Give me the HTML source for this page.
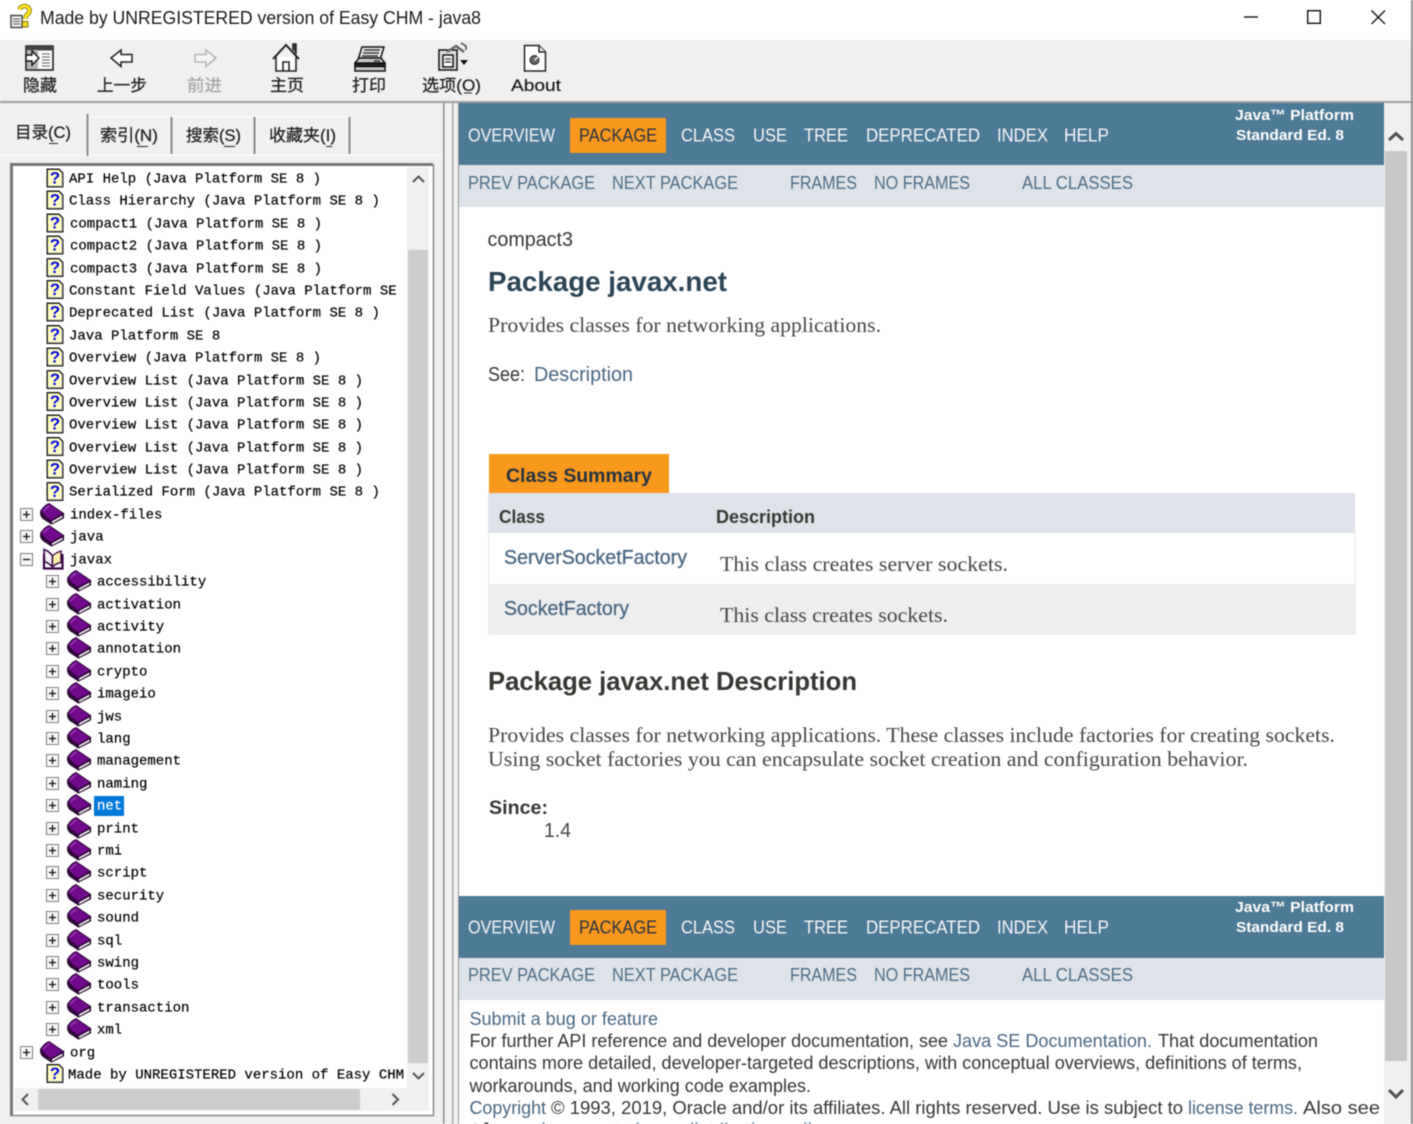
<!DOCTYPE html>
<html lang="zh">
<head>
<meta charset="utf-8">
<title>Made by UNREGISTERED version of Easy CHM - java8</title>
<style>
html,body{margin:0;padding:0;background:#fff;width:1413px;height:1124px;overflow:hidden}
svg{display:block;filter:blur(.4px)}
text{white-space:pre}
.ui{font-family:"Liberation Sans","Noto Sans CJK SC",sans-serif;font-size:17px;fill:#1a1a1a}
.cjk{font-family:"Liberation Sans","Noto Sans CJK SC",sans-serif;font-size:16.5px;fill:#222;stroke:#222;stroke-width:.25px}
.tr{font-family:"Liberation Mono","Noto Sans CJK SC",monospace;font-size:14px;fill:#000;stroke:#000;stroke-width:.2px}
.nav{font-family:"Liberation Sans",sans-serif;font-size:18px;fill:#f4f7f9}
.brand{font-family:"Liberation Sans",sans-serif;font-size:15px;font-weight:bold;fill:#fff}
.sub{font-family:"Liberation Sans",sans-serif;font-size:18px;fill:#4f6d86}
.s{font-family:"Liberation Sans",sans-serif;font-size:20px;fill:#353833}
.b{font-family:"Liberation Sans",sans-serif;font-weight:bold;fill:#353833}
.se{font-family:"Liberation Serif",serif;font-size:21px;fill:#474747}
.lk{font-family:"Liberation Sans",sans-serif;font-size:20px;fill:#4a6782}
.f{font-family:"Liberation Sans",sans-serif;font-size:18px;fill:#353833}
.fl{font-family:"Liberation Sans",sans-serif;font-size:18px;fill:#4a6782}
</style>
</head>
<body>
<svg width="1413" height="1124" viewBox="0 0 1413 1124" xmlns="http://www.w3.org/2000/svg">
<defs>
<symbol id="help" viewBox="0 0 17 19" overflow="visible">
<path d="M.7.7H12.5L16.3 4.500V18.300H.7Z" fill="#ffffc4" stroke="#111" stroke-width="1.300"/>
<path d="M1.500 17.500H15.500V5" fill="none" stroke="#a8a8a8" stroke-width="1"/>
<text x="8.500" y="15" text-anchor="middle" style="font-family:'Liberation Sans',sans-serif;font-size:17px;font-weight:bold;fill:#0808e0">?</text>
</symbol>
<symbol id="book" viewBox="0 0 24 22" overflow="visible">
<path d="M.8 8C0 11 1 13.500 3 15.500L11.500 21 23.500 15V10.500L11 17C6.500 14.500 3 11.500 .8 8Z" fill="#35063f" stroke="#1e0425" stroke-width="1"/>
<path d="M.8 8C3 4.500 6 1.800 9 .6L23.500 10.500 11 17.500C6.500 15 3 11.500 .8 8Z" fill="#720a8e" stroke="#2a0534" stroke-width="1"/>
<path d="M12 18.300L22.500 12.500V14.500L12 20.200Z" fill="#f6f6f6"/>
<path d="M3.500 8C5.500 5.500 7.500 4 9.500 3" stroke="#a44fc0" stroke-width="1" fill="none"/>
</symbol>
<symbol id="open" viewBox="0 0 24 22" overflow="visible">
<path d="M3 6V20.500H21.500V6" fill="#fff" stroke="#3b0848" stroke-width="2.200"/>
<path d="M3 1.500C6.500 2.500 9.500 5 11.500 8V19C9 16 6 14.500 3.500 13.500Z" fill="#f6f2f8" stroke="#3b0848" stroke-width="1.600"/>
<path d="M20 3C17 4 13.500 5.500 11.500 8V19C14 16.500 17 15 20 14.500Z" fill="#fff2a8" stroke="#3b0848" stroke-width="1.400"/>
</symbol>
<symbol id="plus" viewBox="0 0 13 13" overflow="visible">
<rect x=".5" y=".5" width="12" height="12" fill="#f6f6f6" stroke="#7e7e7e"/>
<path d="M3 6.500H10M6.500 3V10" stroke="#111" stroke-width="1.300"/>
</symbol>
<symbol id="minus" viewBox="0 0 13 13" overflow="visible">
<rect x=".5" y=".5" width="12" height="12" fill="#f6f6f6" stroke="#7e7e7e"/>
<path d="M3 6.500H10" stroke="#111" stroke-width="1.300"/>
</symbol>
<clipPath id="treeclip"><rect x="16" y="167" width="391" height="921"/></clipPath>
<clipPath id="mainclip"><rect x="459" y="103" width="925" height="1021"/></clipPath>
</defs>

<!-- window chrome -->
<rect width="1413" height="1124" fill="#f0f0f0"/>
<rect width="1413" height="40" fill="#fff"/>
<rect x="1411" y="0" width="2" height="1124" fill="#8d8d8d"/>
<g>
<path d="M11 15.500H22V27.500H11Z" fill="#f2f2f2" stroke="#444" stroke-width="1.400"/>
<path d="M13 19H20M13 21.500H20M13 24H20" stroke="#555"/>
<path d="M19.500 9.500C21 5 28 5 29.500 9.500C30.500 13 26 14.500 25.500 17.500V19" fill="none" stroke="#8a7300" stroke-width="4.600"/>
<path d="M19.500 9.500C21 5 28 5 29.500 9.500C30.500 13 26 14.500 25.500 17.500V19" fill="none" stroke="#ffe81e" stroke-width="2.800"/>
<rect x="22.500" y="21.500" width="5.500" height="5.500" fill="#f2dc28" stroke="#8a7300" stroke-width="1"/>
</g>
<text class="ui" x="40" y="24" textLength="441" lengthAdjust="spacingAndGlyphs" style="font-size:18px">Made by UNREGISTERED version of Easy CHM - java8</text>
<path d="M1244 17H1258" stroke="#111" stroke-width="1.400"/>
<rect x="1307.700" y="10.700" width="12.600" height="12.600" fill="none" stroke="#111" stroke-width="1.400"/>
<path d="M1371.500 10.500L1385 24M1385 10.500L1371.500 24" stroke="#111" stroke-width="1.300"/>

<!-- toolbar -->
<rect x="0" y="101" width="1411" height="2" fill="#a0a0a0"/>
<g>
<rect x="26" y="46" width="27" height="24" fill="#fafafa" stroke="#222" stroke-width="1.600"/>
<rect x="26" y="46" width="27" height="4.500" fill="#444"/>
<rect x="27" y="50" width="11" height="19" fill="#b4b4b4"/>
<path d="M42 54H50M42 57H50M42 60H50M42 63H50M42 66H50" stroke="#666"/>
<path d="M26 55H32V51L39 58 32 65V61H26Z" fill="#fff" stroke="#111" stroke-width="1.400"/>
</g>
<path d="M111 58L121 50V54.500H132V62H121V66.500Z" fill="#fff" stroke="#222" stroke-width="1.500"/>
<path d="M216 58L206 50V54.500H195V62H206V66.500Z" fill="#f4f4f4" stroke="#b5b5b5" stroke-width="1.500"/>
<g fill="none" stroke="#222" stroke-width="1.600">
<path d="M273 59L286 45 299 59" stroke-width="2"/>
<path d="M276 57V71H296V57" fill="#fff"/>
<path d="M283 71V62H289V71"/>
<path d="M293 50V44H296V54" fill="#444"/>
</g>
<g stroke="#111" stroke-width="1.500">
<path d="M362 47H384L380 60H358Z" fill="#eee"/>
<path d="M364 50H380M363 53H379M362 56H378" stroke="#333" stroke-width="1.400"/>
<path d="M359 58H381L385 63V71H355V63Z" fill="#ccc"/>
<path d="M355 63H385V66.500H355Z" fill="#222"/>
<rect x="374" y="60" width="6" height="2" fill="#555" stroke="none"/>
</g>
<g stroke="#111" stroke-width="1.500">
<rect x="439" y="50" width="18" height="20" fill="#ddd"/>
<rect x="443" y="55" width="10" height="12" fill="#fff"/>
<path d="M445 59H451M445 62H451" stroke="#444"/>
<path d="M447 52L456 46 464 52" fill="none" stroke="#666" stroke-width="2.400"/>
<path d="M461 43L466 46V50" fill="none" stroke="#444"/>
<path d="M460 60H468L464 65Z" fill="#111" stroke="none"/>
</g>
<g stroke="#222" stroke-width="1.500">
<path d="M524.500 45.500H539L545.500 52V71H524.500Z" fill="#fff"/>
<path d="M539 45.500V52H545.500" fill="#e8e8e8"/>
<circle cx="534.500" cy="60" r="4.500" fill="#666" stroke="#222" stroke-width="1"/>
<path d="M534.500 60L538 57" stroke="#eee"/>
</g>
<text class="cjk" x="23" y="91" textLength="34" lengthAdjust="spacingAndGlyphs">隐藏</text>
<text class="cjk" x="97" y="91" textLength="50" lengthAdjust="spacingAndGlyphs">上一步</text>
<text class="cjk" x="187" y="91" textLength="35" lengthAdjust="spacingAndGlyphs" style="fill:#a5a5a5;stroke:#a5a5a5">前进</text>
<text class="cjk" x="270" y="91" textLength="34" lengthAdjust="spacingAndGlyphs">主页</text>
<text class="cjk" x="352" y="91" textLength="34" lengthAdjust="spacingAndGlyphs">打印</text>
<text class="cjk" x="422" y="91" textLength="59" lengthAdjust="spacingAndGlyphs">选项(O)</text>
<path d="M464 93H472" stroke="#222"/>
<text class="ui" x="511" y="91" textLength="50" lengthAdjust="spacingAndGlyphs" stroke="#1a1a1a" stroke-width=".2">About</text>

<!-- left panel tabs -->
<rect x="0" y="103" width="443" height="1021" fill="#f0f0f0"/>
<rect x="443" y="103" width="1.500" height="1021" fill="#8f8f8f"/>
<rect x="452" y="103" width="1.500" height="1021" fill="#a8a8a8"/>
<rect x="458" y="103" width="1.500" height="1021" fill="#8f8f8f"/>
<path d="M0 155.500H443" stroke="#fff"/>
<path d="M88 116.500H171M172 116.500H254M255 116.500H349" stroke="#fff"/>
<rect x="86.500" y="114" width="2" height="42" fill="#8a8a8a"/>
<rect x="170.500" y="117" width="2" height="37" fill="#8a8a8a"/>
<rect x="253.500" y="117" width="2" height="37" fill="#8a8a8a"/>
<rect x="348.500" y="117" width="2" height="37" fill="#8a8a8a"/>
<text class="cjk" x="15" y="138" textLength="56" lengthAdjust="spacingAndGlyphs">目录(C)</text>
<text class="cjk" x="100" y="141" textLength="58" lengthAdjust="spacingAndGlyphs">索引(N)</text>
<text class="cjk" x="186" y="141" textLength="55" lengthAdjust="spacingAndGlyphs">搜索(S)</text>
<text class="cjk" x="269" y="141" textLength="67" lengthAdjust="spacingAndGlyphs">收藏夹(I)</text>
<path d="M49 143.500H58M137 146.500H148M224 146.500H235M326 146.500H332" stroke="#222"/>

<!-- tree box -->
<rect x="10" y="163" width="424" height="953" fill="#fff"/>
<path d="M11.500 1115V164.500H433" fill="none" stroke="#777" stroke-width="3"/>
<path d="M433.500 164V1115.500H10" fill="none" stroke="#8a8a8a" stroke-width="1.500"/>
<rect x="407" y="167" width="22" height="921" fill="#f0f0f0"/>
<rect x="408" y="250" width="20" height="813" fill="#cdcdcd"/>
<path d="M413 182L418.500 176.500 424 182" fill="none" stroke="#555" stroke-width="2"/>
<path d="M413 1073L418.500 1078.500 424 1073" fill="none" stroke="#555" stroke-width="2"/>
<rect x="14" y="1088" width="415" height="23" fill="#f0f0f0"/>
<rect x="38" y="1089" width="322" height="21" fill="#cdcdcd"/>
<path d="M28 1094L22.500 1099.500 28 1105" fill="none" stroke="#555" stroke-width="2"/>
<path d="M392.500 1094L398 1099.500 392.500 1105" fill="none" stroke="#555" stroke-width="2"/>

<!-- tree icons -->
<use href="#help" x="46.500" y="168.500" width="17" height="19"/>
<use href="#help" x="46.500" y="190.500" width="17" height="19"/>
<use href="#help" x="46.500" y="213.500" width="17" height="19"/>
<use href="#help" x="46.500" y="235.500" width="17" height="19"/>
<use href="#help" x="46.500" y="258" width="17" height="19"/>
<use href="#help" x="46.500" y="280" width="17" height="19"/>
<use href="#help" x="46.500" y="302.500" width="17" height="19"/>
<use href="#help" x="46.500" y="325" width="17" height="19"/>
<use href="#help" x="46.500" y="347.500" width="17" height="19"/>
<use href="#help" x="46.500" y="370" width="17" height="19"/>
<use href="#help" x="46.500" y="392" width="17" height="19"/>
<use href="#help" x="46.500" y="414.500" width="17" height="19"/>
<use href="#help" x="46.500" y="437" width="17" height="19"/>
<use href="#help" x="46.500" y="459.500" width="17" height="19"/>
<use href="#help" x="46.500" y="482" width="17" height="19"/>
<use href="#help" x="46.500" y="1064" width="17" height="19"/>

<use href="#plus" x="20" y="508" width="13" height="13"/><use href="#book" x="40" y="503" width="24" height="22"/>
<use href="#plus" x="20" y="530" width="13" height="13"/><use href="#book" x="40" y="525" width="24" height="22"/>
<use href="#minus" x="20" y="553" width="13" height="13"/><use href="#open" x="41" y="548" width="24" height="22"/>
<use href="#plus" x="46" y="575" width="13" height="13"/><use href="#book" x="67" y="570" width="24" height="22"/>
<use href="#plus" x="46" y="598" width="13" height="13"/><use href="#book" x="67" y="593" width="24" height="22"/>
<use href="#plus" x="46" y="620" width="13" height="13"/><use href="#book" x="67" y="615" width="24" height="22"/>
<use href="#plus" x="46" y="642" width="13" height="13"/><use href="#book" x="67" y="637" width="24" height="22"/>
<use href="#plus" x="46" y="665" width="13" height="13"/><use href="#book" x="67" y="660" width="24" height="22"/>
<use href="#plus" x="46" y="687" width="13" height="13"/><use href="#book" x="67" y="682" width="24" height="22"/>
<use href="#plus" x="46" y="710" width="13" height="13"/><use href="#book" x="67" y="705" width="24" height="22"/>
<use href="#plus" x="46" y="732" width="13" height="13"/><use href="#book" x="67" y="727" width="24" height="22"/>
<use href="#plus" x="46" y="754" width="13" height="13"/><use href="#book" x="67" y="749" width="24" height="22"/>
<use href="#plus" x="46" y="777" width="13" height="13"/><use href="#book" x="67" y="772" width="24" height="22"/>
<use href="#plus" x="46" y="799" width="13" height="13"/><use href="#book" x="67" y="794" width="24" height="22"/>
<use href="#plus" x="46" y="822" width="13" height="13"/><use href="#book" x="67" y="817" width="24" height="22"/>
<use href="#plus" x="46" y="844" width="13" height="13"/><use href="#book" x="67" y="839" width="24" height="22"/>
<use href="#plus" x="46" y="866" width="13" height="13"/><use href="#book" x="67" y="861" width="24" height="22"/>
<use href="#plus" x="46" y="889" width="13" height="13"/><use href="#book" x="67" y="884" width="24" height="22"/>
<use href="#plus" x="46" y="911" width="13" height="13"/><use href="#book" x="67" y="906" width="24" height="22"/>
<use href="#plus" x="46" y="934" width="13" height="13"/><use href="#book" x="67" y="929" width="24" height="22"/>
<use href="#plus" x="46" y="956" width="13" height="13"/><use href="#book" x="67" y="951" width="24" height="22"/>
<use href="#plus" x="46" y="978" width="13" height="13"/><use href="#book" x="67" y="973" width="24" height="22"/>
<use href="#plus" x="46" y="1001" width="13" height="13"/><use href="#book" x="67" y="996" width="24" height="22"/>
<use href="#plus" x="46" y="1023" width="13" height="13"/><use href="#book" x="67" y="1018" width="24" height="22"/>
<use href="#plus" x="20" y="1046" width="13" height="13"/><use href="#book" x="40" y="1041" width="24" height="22"/>

<rect x="94" y="796" width="30" height="20" fill="#0078d7"/>

<g clip-path="url(#treeclip)">
<g transform="translate(0,-.7)">
<text class="tr" x="69" y="183">API Help (Java Platform SE 8 )</text>
<text class="tr" x="69" y="205">Class Hierarchy (Java Platform SE 8 )</text>
<text class="tr" x="70" y="228">compact1 (Java Platform SE 8 )</text>
<text class="tr" x="70" y="250">compact2 (Java Platform SE 8 )</text>
<text class="tr" x="70" y="273">compact3 (Java Platform SE 8 )</text>
<text class="tr" x="69" y="295">Constant Field Values (Java Platform SE</text>
<text class="tr" x="69" y="317">Deprecated List (Java Platform SE 8 )</text>
<text class="tr" x="69" y="340">Java Platform SE 8</text>
<text class="tr" x="69" y="362">Overview (Java Platform SE 8 )</text>
<text class="tr" x="69" y="385">Overview List (Java Platform SE 8 )</text>
<text class="tr" x="69" y="407">Overview List (Java Platform SE 8 )</text>
<text class="tr" x="69" y="429">Overview List (Java Platform SE 8 )</text>
<text class="tr" x="69" y="452">Overview List (Java Platform SE 8 )</text>
<text class="tr" x="69" y="474">Overview List (Java Platform SE 8 )</text>
<text class="tr" x="69" y="496">Serialized Form (Java Platform SE 8 )</text>
<text class="tr" x="70" y="519">index-files</text>
<text class="tr" x="70" y="541">java</text>
<text class="tr" x="70" y="564">javax</text>
<text class="tr" x="97" y="586">accessibility</text>
<text class="tr" x="97" y="609">activation</text>
<text class="tr" x="97" y="631">activity</text>
<text class="tr" x="97" y="653">annotation</text>
<text class="tr" x="97" y="676">crypto</text>
<text class="tr" x="97" y="698">imageio</text>
<text class="tr" x="97" y="721">jws</text>
<text class="tr" x="97" y="743">lang</text>
<text class="tr" x="97" y="765">management</text>
<text class="tr" x="97" y="788">naming</text>
<text class="tr" x="97" y="810" style="fill:#fff;stroke:#fff">net</text>
<text class="tr" x="97" y="833">print</text>
<text class="tr" x="97" y="855">rmi</text>
<text class="tr" x="97" y="877">script</text>
<text class="tr" x="97" y="900">security</text>
<text class="tr" x="97" y="922">sound</text>
<text class="tr" x="97" y="945">sql</text>
<text class="tr" x="97" y="967">swing</text>
<text class="tr" x="97" y="989">tools</text>
<text class="tr" x="97" y="1012">transaction</text>
<text class="tr" x="97" y="1034">xml</text>
<text class="tr" x="70" y="1057">org</text>
<text class="tr" x="68" y="1079">Made by UNREGISTERED version of Easy CHM</text>
</g>
</g>

<!-- right scrollbar -->
<rect x="1384" y="103" width="27" height="1021" fill="#f0f0f0"/>
<rect x="1385" y="151" width="22" height="910" fill="#c8c8c8"/>
<path d="M1389 140L1396 133.500 1403 140" fill="none" stroke="#505050" stroke-width="3"/>
<path d="M1389 1090L1396 1097 1403 1090" fill="none" stroke="#505050" stroke-width="3"/>

<!-- content -->
<g clip-path="url(#mainclip)">
<rect x="459" y="103" width="925" height="1021" fill="#fff"/>

<rect x="459" y="103" width="925" height="62" fill="#4d7a97"/>
<rect x="459" y="165" width="925" height="42" fill="#dee3e9"/>
<rect x="570" y="118" width="96" height="35" fill="#f8981d"/>
<text class="nav" x="468" y="141.500" textLength="87" lengthAdjust="spacingAndGlyphs">OVERVIEW</text>
<text class="nav" x="579" y="141.500" textLength="78" lengthAdjust="spacingAndGlyphs" style="fill:#253441">PACKAGE</text>
<text class="nav" x="681" y="141.500" textLength="54" lengthAdjust="spacingAndGlyphs">CLASS</text>
<text class="nav" x="753" y="141.500" textLength="34" lengthAdjust="spacingAndGlyphs">USE</text>
<text class="nav" x="804" y="141.500" textLength="44" lengthAdjust="spacingAndGlyphs">TREE</text>
<text class="nav" x="866" y="141.500" textLength="114" lengthAdjust="spacingAndGlyphs">DEPRECATED</text>
<text class="nav" x="997" y="141.500" textLength="51" lengthAdjust="spacingAndGlyphs">INDEX</text>
<text class="nav" x="1064" y="141.500" textLength="45" lengthAdjust="spacingAndGlyphs">HELP</text>
<text class="brand" x="1235" y="120" textLength="119" lengthAdjust="spacingAndGlyphs">Java™ Platform</text>
<text class="brand" x="1236" y="140" textLength="108" lengthAdjust="spacingAndGlyphs">Standard Ed. 8</text>
<text class="sub" x="468" y="189" textLength="127" lengthAdjust="spacingAndGlyphs">PREV PACKAGE</text>
<text class="sub" x="612" y="189" textLength="126" lengthAdjust="spacingAndGlyphs">NEXT PACKAGE</text>
<text class="sub" x="790" y="189" textLength="67" lengthAdjust="spacingAndGlyphs">FRAMES</text>
<text class="sub" x="874" y="189" textLength="96" lengthAdjust="spacingAndGlyphs">NO FRAMES</text>
<text class="sub" x="1022" y="189" textLength="111" lengthAdjust="spacingAndGlyphs">ALL CLASSES</text>

<text class="s" x="487.500" y="246" textLength="85.500" lengthAdjust="spacingAndGlyphs">compact3</text>
<text class="b" x="488" y="291" textLength="239" lengthAdjust="spacingAndGlyphs" style="font-size:28px;fill:#2c4557">Package javax.net</text>
<text class="se" x="488" y="332" textLength="393" lengthAdjust="spacingAndGlyphs">Provides classes for networking applications.</text>
<text class="s" x="488" y="381" textLength="37" lengthAdjust="spacingAndGlyphs">See:</text>
<text class="lk" x="534" y="381" textLength="99" lengthAdjust="spacingAndGlyphs">Description</text>

<rect x="489" y="454" width="180" height="39" fill="#f8981d"/>
<text class="b" x="506" y="482" textLength="146" lengthAdjust="spacingAndGlyphs" style="font-size:19px;fill:#253441">Class Summary</text>
<rect x="488" y="493" width="867" height="40" fill="#dee3e9"/>
<text class="b" x="499" y="523" textLength="46" lengthAdjust="spacingAndGlyphs" style="font-size:18px">Class</text>
<text class="b" x="716" y="523" textLength="99" lengthAdjust="spacingAndGlyphs" style="font-size:18px">Description</text>
<rect x="488" y="533" width="867" height="51" fill="#fff"/>
<rect x="1354" y="533" width="1.500" height="51" fill="#eeeeef"/>
<rect x="488" y="533" width="1.500" height="51" fill="#eeeeef"/>
<rect x="488" y="584" width="868" height="51" fill="#eeeeef"/>
<text class="lk" x="504" y="564" textLength="183" lengthAdjust="spacingAndGlyphs" stroke="#4a6782" stroke-width=".3">ServerSocketFactory</text>
<text class="se" x="720" y="571" textLength="288" lengthAdjust="spacingAndGlyphs">This class creates server sockets.</text>
<text class="lk" x="504" y="615" textLength="125" lengthAdjust="spacingAndGlyphs" stroke="#4a6782" stroke-width=".3">SocketFactory</text>
<text class="se" x="720" y="622" textLength="228" lengthAdjust="spacingAndGlyphs">This class creates sockets.</text>

<text class="b" x="488" y="690" textLength="369" lengthAdjust="spacingAndGlyphs" style="font-size:26px">Package javax.net Description</text>
<text class="se" x="488" y="742" textLength="847" lengthAdjust="spacingAndGlyphs">Provides classes for networking applications. These classes include factories for creating sockets.</text>
<text class="se" x="488" y="766" textLength="760" lengthAdjust="spacingAndGlyphs">Using socket factories you can encapsulate socket creation and configuration behavior.</text>
<text class="b" x="489" y="814" textLength="59" lengthAdjust="spacingAndGlyphs" style="font-size:19px">Since:</text>
<text class="s" x="544" y="837" textLength="27" lengthAdjust="spacingAndGlyphs" style="fill:#474747">1.4</text>

<rect x="459" y="896" width="925" height="62" fill="#4d7a97"/>
<rect x="459" y="958" width="925" height="42" fill="#dee3e9"/>
<rect x="570" y="910" width="96" height="35" fill="#f8981d"/>
<text class="nav" x="468" y="933.500" textLength="87" lengthAdjust="spacingAndGlyphs">OVERVIEW</text>
<text class="nav" x="579" y="933.500" textLength="78" lengthAdjust="spacingAndGlyphs" style="fill:#253441">PACKAGE</text>
<text class="nav" x="681" y="933.500" textLength="54" lengthAdjust="spacingAndGlyphs">CLASS</text>
<text class="nav" x="753" y="933.500" textLength="34" lengthAdjust="spacingAndGlyphs">USE</text>
<text class="nav" x="804" y="933.500" textLength="44" lengthAdjust="spacingAndGlyphs">TREE</text>
<text class="nav" x="866" y="933.500" textLength="114" lengthAdjust="spacingAndGlyphs">DEPRECATED</text>
<text class="nav" x="997" y="933.500" textLength="51" lengthAdjust="spacingAndGlyphs">INDEX</text>
<text class="nav" x="1064" y="933.500" textLength="45" lengthAdjust="spacingAndGlyphs">HELP</text>
<text class="brand" x="1235" y="912" textLength="119" lengthAdjust="spacingAndGlyphs">Java™ Platform</text>
<text class="brand" x="1236" y="932" textLength="108" lengthAdjust="spacingAndGlyphs">Standard Ed. 8</text>
<text class="sub" x="468" y="981" textLength="127" lengthAdjust="spacingAndGlyphs">PREV PACKAGE</text>
<text class="sub" x="612" y="981" textLength="126" lengthAdjust="spacingAndGlyphs">NEXT PACKAGE</text>
<text class="sub" x="790" y="981" textLength="67" lengthAdjust="spacingAndGlyphs">FRAMES</text>
<text class="sub" x="874" y="981" textLength="96" lengthAdjust="spacingAndGlyphs">NO FRAMES</text>
<text class="sub" x="1022" y="981" textLength="111" lengthAdjust="spacingAndGlyphs">ALL CLASSES</text>

<text class="fl" x="469.500" y="1025" textLength="188.500" lengthAdjust="spacingAndGlyphs">Submit a bug or feature</text>
<text class="f" x="469.500" y="1047" textLength="478.500" lengthAdjust="spacingAndGlyphs">For further API reference and developer documentation, see</text>
<text class="fl" x="953" y="1047" textLength="199" lengthAdjust="spacingAndGlyphs">Java SE Documentation.</text>
<text class="f" x="1158" y="1047" textLength="160" lengthAdjust="spacingAndGlyphs">That documentation</text>
<text class="f" x="469.500" y="1069" textLength="832.500" lengthAdjust="spacingAndGlyphs">contains more detailed, developer-targeted descriptions, with conceptual overviews, definitions of terms,</text>
<text class="f" x="469.500" y="1092" textLength="341.500" lengthAdjust="spacingAndGlyphs">workarounds, and working code examples.</text>
<text class="fl" x="469.500" y="1114" textLength="76.500" lengthAdjust="spacingAndGlyphs">Copyright</text>
<text class="f" x="551" y="1114" textLength="632" lengthAdjust="spacingAndGlyphs">© 1993, 2019, Oracle and/or its affiliates. All rights reserved. Use is subject to</text>
<text class="fl" x="1188" y="1114" textLength="110" lengthAdjust="spacingAndGlyphs">license terms.</text>
<text class="f" x="1303" y="1114" textLength="77" lengthAdjust="spacingAndGlyphs">Also see</text>
<text class="f" x="469.500" y="1136" textLength="60" lengthAdjust="spacingAndGlyphs">the</text>
<text class="fl" x="535" y="1136" textLength="300" lengthAdjust="spacingAndGlyphs">documentation redistribution policy.</text>
</g>
</svg>
</body>
</html>
